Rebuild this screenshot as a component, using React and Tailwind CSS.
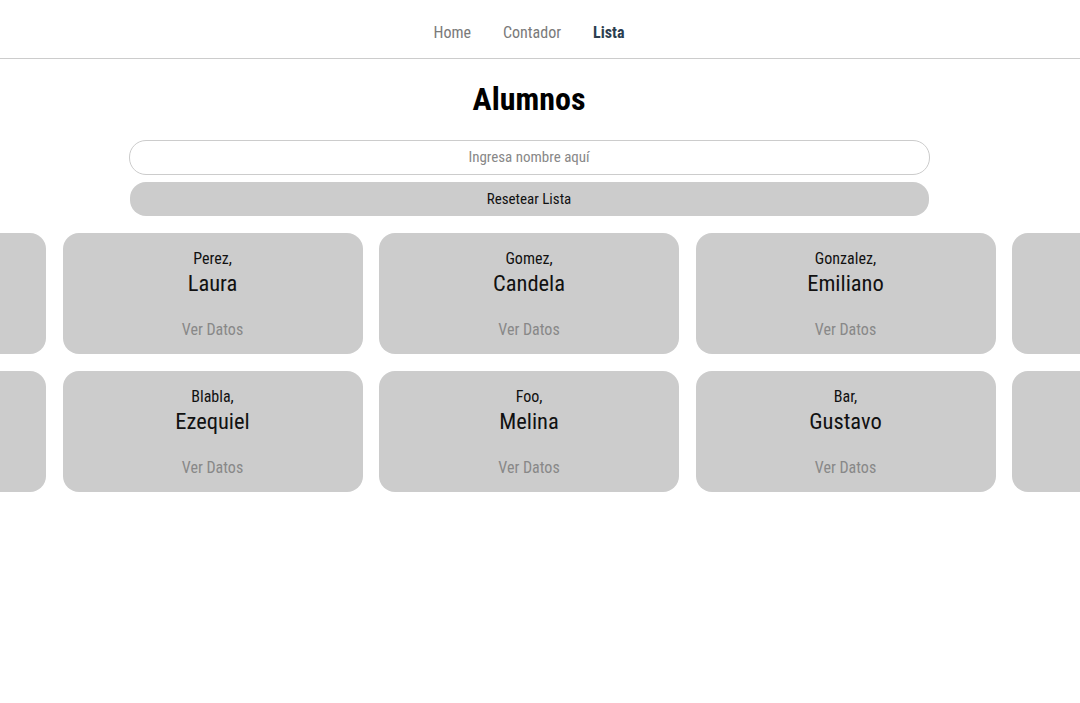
import React from 'react';

const alumnos = [
  { apellido: 'Lopez', nombre: 'Martin' },
  { apellido: 'Perez', nombre: 'Laura' },
  { apellido: 'Gomez', nombre: 'Candela' },
  { apellido: 'Gonzalez', nombre: 'Emiliano' },
  { apellido: 'Diaz', nombre: 'Julian' },
  { apellido: 'Ruiz', nombre: 'Sofia' },
  { apellido: 'Blabla', nombre: 'Ezequiel' },
  { apellido: 'Foo', nombre: 'Melina' },
  { apellido: 'Bar', nombre: 'Gustavo' },
  { apellido: 'Baz', nombre: 'Lucia' },
];

// edge cards are mostly off-screen, so their text never shows
const Card = ({ apellido, nombre, hidden }) => (
  <div className="w-[300px] h-[121px] shrink-0 rounded-[16px] bg-[#cccccc] flex flex-col items-center pt-[16px]">
    {!hidden && (
      <>
        <p className="text-[16px] leading-[20px] text-[#111]">{apellido},</p>
        <p className="text-[22.5px] leading-[28px] text-[#111]">{nombre}</p>
        <a className="mt-[23px] text-[16px] leading-[20px] text-[#888] cursor-pointer">Ver Datos</a>
      </>
    )}
  </div>
);

export default function App() {
  const rows = [alumnos.slice(0, 5), alumnos.slice(5, 10)];
  return (
    <div
      className="w-[1080px] h-[703px] overflow-hidden bg-white"
      style={{ fontFamily: '"Roboto Condensed", Roboto, "Liberation Sans", sans-serif', fontStretch: 'condensed' }}
    >
      <nav className="h-[59px] border-b border-[#cccccc]">
        <div className="w-[1058px] h-full pt-[8px] flex items-center justify-center gap-[32px] text-[16px]">
          <a className="text-[#7a7a7a]">Home</a>
          <a className="text-[#7a7a7a]">Contador</a>
          <a className="text-[#2c3e50] font-bold">Lista</a>
        </div>
      </nav>
      <div className="w-[1058px]">
        <h1 className="mt-[20px] text-center text-[32px] leading-[40px] font-bold text-black">Alumnos</h1>
        <div className="mt-[21px] flex flex-col items-center gap-[7px]">
          <input
            className="w-[801px] h-[35px] rounded-[17px] border border-[#cccccc] text-center text-[15px] leading-[33px] pb-[2px] outline-none placeholder:text-[#888]"
            placeholder="Ingresa nombre aquí"
          />
          <button className="w-[799px] h-[34px] rounded-[16px] bg-[#cccccc] text-[15px] pt-[1px] text-[#111]">Resetear Lista</button>
        </div>
        <div className="mt-[17px] flex flex-col items-center gap-[17px]">
          {rows.map((row, i) => (
            <div key={i} className="flex gap-[16.5px] justify-center w-[1566px] shrink-0">
              {row.map((a, j) => (
                <Card key={a.nombre} {...a} hidden={j === 0 || j === row.length - 1} />
              ))}
            </div>
          ))}
        </div>
      </div>
    </div>
  );
}
